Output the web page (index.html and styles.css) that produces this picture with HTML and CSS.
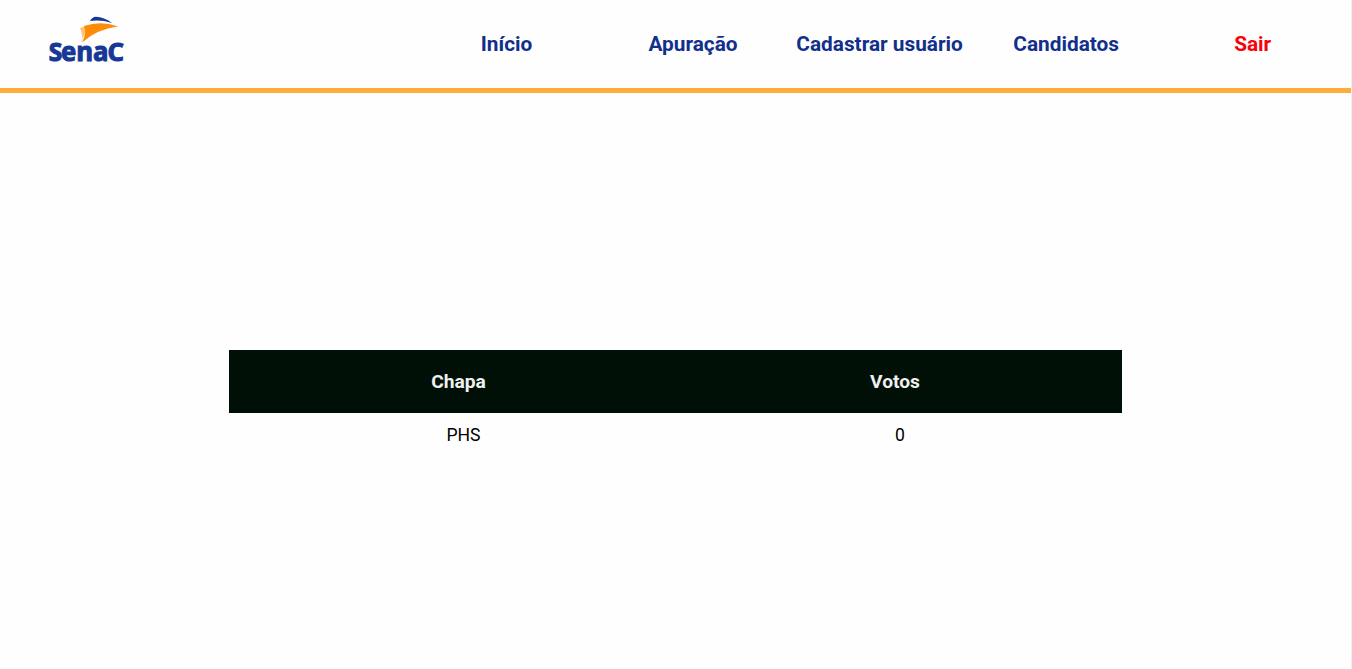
FILE: index.html
```html
<!DOCTYPE html>
<html lang="pt-BR">
<head>
<meta charset="utf-8">
<title>Apuração</title>
<link rel="stylesheet" href="styles.css">
</head>
<body>
<header class="header">
  <svg class="logo" viewBox="0 0 75 50" role="img" aria-label="Senac">
    <path class="logo-blue" d="M41 5Q43 1 47 .8Q55 1 63 7Q52 3.6 41 5Z"/>
    <path class="logo-light" d="M31 12L39 9L35 20Q32 23 33 27Q34 18 31 12Z"/>
    <path class="logo-orange" d="M35 10Q52 4.5 69 10.5Q48 13 33 26.5Q38 17 35 10Z"/>
    <text class="logo-text" x="-.2" y="45.4" textLength="13.4" lengthAdjust="spacingAndGlyphs">S</text>
    <text class="logo-text logo-middle" x="12" y="45.4" textLength="47.5" lengthAdjust="spacingAndGlyphs">ena</text>
    <text class="logo-text" x="58.4" y="45.4" textLength="16.5" lengthAdjust="spacingAndGlyphs">C</text>
  </svg>
  <nav class="nav">
    <a class="link">Início</a>
    <a class="link">Apuração</a>
    <a class="link">Cadastrar usuário</a>
    <a class="link">Candidatos</a>
    <a class="link exit">Sair</a>
  </nav>
</header>
<main class="main">
  <div class="table">
    <div class="row head"><span>Chapa</span><span>Votos</span></div>
    <div class="row data"><span>PHS</span><span>0</span></div>
  </div>
</main>
</body>
</html>
```
FILE: styles.css
```css
* { box-sizing: border-box; }
body {
  margin: 0;
  height: 669px;
  border-right: 1px solid #f0f0f0;
  background: #fefefe;
  font-family: Roboto, sans-serif;
}
.header {
  display: flex;
  height: 93px;
  padding: 16px 5px 0 49px;
  border-bottom: 5px solid #ffac38;
}
.logo { width: 75px; height: 50px; flex: none; overflow: visible; }
.logo-blue { fill: #173896; }
.logo-orange { fill: #ff8c08; }
.logo-light { fill: #ffc078; }
.logo-text {
  fill: #173896;
  stroke: #173896;
  stroke-width: 1.1px;
  font: 700 24.5px "Open Sans", sans-serif;
}
.logo-middle { font-size: 26.5px; }
.nav {
  display: grid;
  grid-template-columns: repeat(5, 1fr);
  width: 932.8px;
  height: 56px;
  margin-left: auto;
  align-items: center;
  text-align: center;
}
.link { color: #112f8b; font-size: 20.8px; font-weight: 700; }
.exit { color: #f9000a; }
.main { padding: 257px 229px 0; }
.table { width: 893px; }
.row { display: grid; align-items: center; text-align: center; }
.head {
  grid-template-columns: 459px 414px;
  height: 63px;
  background: #001006;
  color: #f0f0f0;
  font-size: 19.2px;
  font-weight: 700;
}
.data {
  grid-template-columns: 469px 404px;
  height: 44px;
  color: #000;
  font-size: 17.6px;
}
```
